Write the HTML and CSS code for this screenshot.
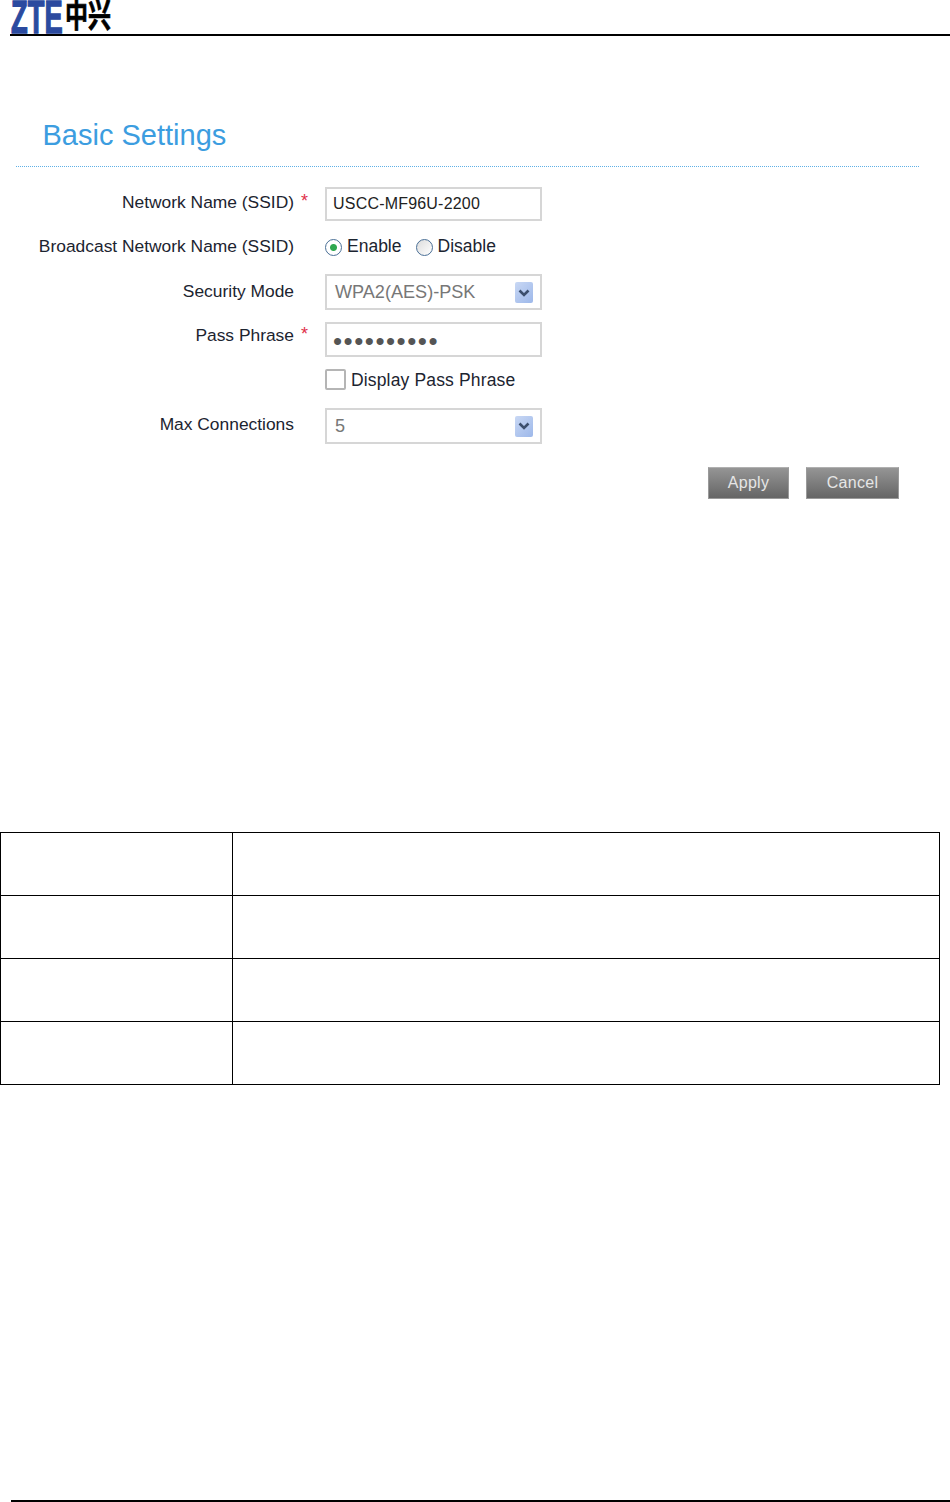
FILE: index.html
```html
<!DOCTYPE html>
<html lang="en">
<head>
  <meta charset="UTF-8">
  <meta name="viewport" content="width=device-width, initial-scale=1.0">
  <title>Basic Settings</title>
  <link rel="stylesheet" href="styles.css">
</head>
<body>
  <div class="page">
    <header class="doc-header">
      <svg class="logo" width="100" height="34" viewBox="0 0 100 34">
        <text class="logo-zte" transform="translate(0 33) scale(1.14 1.92)">ZTE</text>
        <text class="logo-cn" transform="translate(54 27) scale(1 1.42)">中兴</text>
      </svg>
    </header>

    <section class="panel">
      <h1 class="panel-title">Basic Settings</h1>

      <form class="settings-form">
        <div class="row row-ssid">
          <label class="row-label">Network Name (SSID)</label>
          <span class="req">*</span>
          <input class="field field-ssid" type="text" value="USCC-MF96U-2200">
        </div>

        <div class="row row-broadcast">
          <label class="row-label">Broadcast Network Name (SSID)</label>
          <span class="req"></span>
          <div class="choices">
            <label class="choice"><input class="radio" type="radio" name="broadcast" checked>Enable</label>
            <label class="choice"><input class="radio" type="radio" name="broadcast">Disable</label>
          </div>
        </div>

        <div class="row row-mode">
          <label class="row-label">Security Mode</label>
          <span class="req"></span>
          <div class="select">
            <span>WPA2(AES)-PSK</span>
            <span class="select-arrow">
              <svg width="12" height="8" viewBox="0 0 12 8"><path d="M1.5 1.5 L6 6 L10.5 1.5" fill="none" stroke="#3c4f6e" stroke-width="2.6"/></svg>
            </span>
          </div>
        </div>

        <div class="row row-pass">
          <label class="row-label">Pass Phrase</label>
          <span class="req">*</span>
          <input class="field field-pass" type="password" value="1234567890">
        </div>

        <div class="row row-show">
          <span class="row-label"></span>
          <span class="req"></span>
          <label class="choice choice-check"><input class="check" type="checkbox">Display Pass Phrase</label>
        </div>

        <div class="row row-max">
          <label class="row-label">Max Connections</label>
          <span class="req"></span>
          <div class="select select-max">
            <span>5</span>
            <span class="select-arrow">
              <svg width="12" height="8" viewBox="0 0 12 8"><path d="M1.5 1.5 L6 6 L10.5 1.5" fill="none" stroke="#3c4f6e" stroke-width="2.6"/></svg>
            </span>
          </div>
        </div>

        <div class="actions">
          <button class="btn btn-apply" type="button">Apply</button>
          <button class="btn btn-cancel" type="button">Cancel</button>
        </div>
      </form>
    </section>

    <table class="doc-table">
      <tr><td class="col-a"></td><td></td></tr>
      <tr><td class="col-a"></td><td></td></tr>
      <tr><td class="col-a"></td><td></td></tr>
      <tr><td class="col-a"></td><td></td></tr>
    </table>

    <footer class="doc-footer"></footer>
  </div>
</body>
</html>
```

FILE: styles.css
```css
html, body {
  margin: 0;
  padding: 0;
  background: #ffffff;
}
body {
  font-family: "Liberation Sans", Arial, sans-serif;
  color: #1c2430;
}
.page {
  width: 950px;
  height: 1502px;
  display: flex;
  flex-direction: column;
  overflow: hidden;
}

/* header */
.doc-header {
  height: 34px;
  margin-left: 10px;
  border-bottom: 2px solid #000;
}
.logo {
  display: block;
  margin-left: 1px;
}
.logo-zte {
  font-family: "Liberation Sans", sans-serif;
  font-weight: bold;
  font-size: 24px;
  fill: #2b4a9f;
  stroke: #2b4a9f;
  stroke-width: 0.7px;
}
.logo-cn {
  font-family: "Noto Sans CJK SC", sans-serif;
  font-weight: bold;
  font-size: 23px;
  fill: #000;
  stroke: #000;
  stroke-width: 0.5px;
}

/* panel */
.panel {
  margin: 0 31px 0 16px;
  height: 796px;
}
.panel-title {
  margin: 0;
  padding: 82px 0 0 26.5px;
  height: 48px;
  line-height: 34px;
  font-size: 29px;
  font-weight: normal;
  color: #3c9de0;
  border-bottom: 1px dotted #5fb0e6;
}
.settings-form {
  padding-top: 20px;
}
.row {
  display: flex;
  align-items: flex-start;
}
.row-label {
  width: 278px;
  flex: none;
  text-align: right;
  font-size: 17.4px;
  line-height: 20px;
}
.req {
  width: 31px;
  flex: none;
  padding-left: 7px;
  box-sizing: border-box;
  color: #e0304a;
  font-size: 18px;
  line-height: 20px;
}
.row-ssid { height: 44px; }
.row-ssid .row-label { padding-top: 5px; }
.row-ssid .req { padding-top: 4px; }
.row-broadcast { height: 43px; }
.row-broadcast .row-label { padding-top: 5px; }
.row-broadcast .choices { padding-top: 5px; }
.row-mode { height: 48px; }
.row-mode .row-label { padding-top: 7px; }
.row-mode .select { padding-top: 1px; }
.row-pass { height: 48px; }
.row-pass .row-label { padding-top: 3px; }
.row-pass .req { padding-top: 2px; }
.row-show { height: 38px; }
.row-max { height: 59px; }
.row-max .row-label { padding-top: 6px; }

.field {
  width: 217px;
  box-sizing: border-box;
  margin: 0;
  padding: 0 0 0 6px;
  border: 2px solid #d6d6d6;
  outline: none;
  background: #fff;
  font-family: "Liberation Sans", sans-serif;
  color: #222;
}
.field-ssid {
  height: 34px;
  font-size: 16px;
  letter-spacing: 0.2px;
}
.field-pass {
  height: 35px;
  padding-top: 3px;
  font-size: 26px;
  letter-spacing: 1.5px;
  color: #555;
}

.choices {
  display: flex;
  gap: 14px;
}
.choice {
  display: flex;
  align-items: center;
  font-size: 17.5px;
  line-height: 20px;
  gap: 5px;
}
.radio {
  appearance: none;
  width: 17px;
  height: 17px;
  margin: 3px 0 0;
  border: 1.5px solid #4a6f96;
  border-radius: 50%;
  background: linear-gradient(135deg, #dcdcdc, #ffffff);
  box-sizing: border-box;
}
.radio:checked {
  background: radial-gradient(circle, #2fa84f 0, #2fa84f 3px, #ffffff 4px);
}
.choice-check {
  gap: 5px;
  letter-spacing: 0.15px;
}
.check {
  appearance: none;
  width: 21px;
  height: 21px;
  margin: -1px 0 0;
  border: 2px solid #b5b5b5;
  border-radius: 2px;
  background: #fff;
  box-sizing: border-box;
}

.select {
  width: 217px;
  height: 36px;
  box-sizing: border-box;
  display: flex;
  align-items: center;
  justify-content: space-between;
  padding: 0 7px 0 8px;
  border: 2px solid #d6d6d6;
  font-size: 18.1px;
  color: #777;
}
.select-arrow {
  width: 18px;
  height: 21px;
  display: flex;
  align-items: center;
  justify-content: center;
  border-radius: 2px;
  background: linear-gradient(135deg, #c9d8f4, #9db8ea);
}

.actions {
  display: flex;
  justify-content: flex-end;
  gap: 17px;
  padding-right: 20px;
}
.btn {
  height: 32px;
  padding: 0;
  border: 1px solid #9a9a9a;
  border-top-color: #b0b0b0;
  background: linear-gradient(#959595, #656565);
  color: #e6e6e6;
  font-family: "Liberation Sans", sans-serif;
  font-size: 16px;
  letter-spacing: 0.3px;
}
.btn-apply { width: 81px; }
.btn-cancel { width: 93px; }

/* empty table below the screenshot */
.doc-table {
  width: 940px;
  border-collapse: collapse;
  table-layout: fixed;
}
.doc-table td {
  height: 62px;
  padding: 0;
  border: 1px solid #000;
}
.col-a {
  width: 231px;
}

.doc-footer {
  margin: auto 0 0 11px;
  height: 2px;
  background: #000;
}
```
